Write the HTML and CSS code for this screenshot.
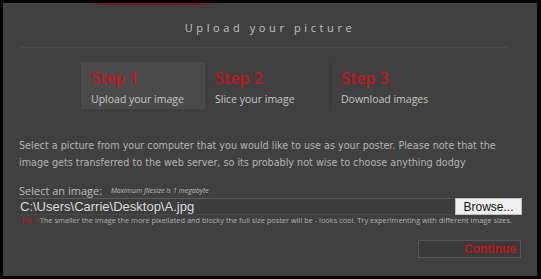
FILE: index.html
```html
<!DOCTYPE html>
<html>
<head>
<meta charset="utf-8">
<link rel="stylesheet" href="styles.css">
</head>
<body>
<div class="panel">
  <div class="glow"></div>
  <h1 class="title">Upload your picture</h1>
  <div class="rule"></div>
  <div class="steps">
    <div class="step active">
      <div class="step-num">Step 1</div>
      <div class="step-label">Upload your image</div>
    </div>
    <div class="step">
      <div class="step-num">Step 2</div>
      <div class="step-label">Slice your image</div>
    </div>
    <div class="step divided">
      <div class="step-num">Step 3</div>
      <div class="step-label">Download images</div>
    </div>
  </div>
  <p class="intro">Select a picture from your computer that you would like to use as your poster. Please note that the image gets transferred to the web server, so its probably not wise to choose anything dodgy</p>
  <div class="field-label">Select an image: <span class="hint">Maximum filesize is 1 megabyte</span></div>
  <div class="file-row">
    <div class="file-input">C:\Users\Carrie\Desktop\A.jpg</div>
    <button class="browse">Browse...</button>
  </div>
  <div class="tip"><span class="tip-mark">Tip *</span> The smaller the image the more pixellated and blocky the full size poster will be - looks cool. Try experimenting with different image sizes.</div>
  <div class="actions">
    <button class="continue">Continue</button>
  </div>
</div>
</body>
</html>
```
FILE: styles.css
```css
html, body {
  margin: 0;
  padding: 0;
  background: #000;
}
body {
  padding: 3px 4px 3px 3px;
  width: 541px;
  height: 279px;
  box-sizing: border-box;
}
.panel {
  position: relative;
  background: #404040;
  height: 273px;
  box-sizing: border-box;
  padding: 0 15px 0 15px;
  font-family: "Open Sans", sans-serif;
  color: #bdbdbd;
}
.glow {
  position: absolute;
  top: 0;
  left: 85px;
  width: 132px;
  height: 2px;
  background: linear-gradient(90deg, rgba(110,20,20,0), rgba(120,25,25,0.9) 15%, rgba(120,25,25,0.9) 85%, rgba(110,20,20,0));
}
.title {
  margin: 0;
  padding-top: 17px;
  height: 27px;
  text-align: center;
  font-size: 11px;
  font-weight: 400;
  letter-spacing: 3.6px;
  color: #c4c4c4;
  line-height: 16px;
}
.rule {
  height: 1px;
  background: #4c4c4c;
  margin: 0 15px 0 3px;
}
.steps {
  display: flex;
  margin: 14px 0 0 63px;
  height: 47px;
}
.step {
  width: 125px;
  box-sizing: border-box;
  padding: 3px 0 0 10px;
}
.step.active {
  background: #4a4a4a;
  width: 124px;
}
.step.divided {
  border-left: 1px solid #383838;
}
.step-num {
  color: #c0161c;
  font-size: 16px;
  font-weight: 600;
  line-height: 26px;
}
.step-label {
  font-size: 10.5px;
  line-height: 16px;
  color: #c8c8c8;
}
.intro {
  margin: 28px 0 0 1px;
  max-width: 485px;
  font-family: "DejaVu Sans Condensed", "DejaVu Sans", sans-serif;
  font-stretch: condensed;
  font-size: 10.7px;
  line-height: 17px;
  color: #b5b5b5;
}
.field-label {
  margin: 13px 0 0 1px;
  font-size: 11px;
  line-height: 14px;
  color: #bdbdbd;
}
.hint {
  font-size: 7px;
  font-style: italic;
  margin-left: 6px;
  vertical-align: 2px;
}
.file-row {
  display: flex;
  align-items: flex-start;
}
.file-input {
  width: 434px;
  height: 17px;
  box-sizing: border-box;
  border-top: 1px solid #5a5a5a;
  border-bottom: 1px solid #4a4a4a;
  background: #3d3d3d;
  font-family: "Liberation Sans", Arial, sans-serif;
  font-size: 13px;
  line-height: 15px;
  color: #dcdcdc;
  padding-left: 2px;
}
.browse {
  margin-left: 3px;
  width: 67px;
  height: 17px;
  padding: 0;
  background: #f0f0f0;
  border: 1px solid #bdbdbd;
  font-family: "Liberation Sans", Arial, sans-serif;
  font-size: 12px;
  color: #111;
}
.tip {
  margin: 0 0 0 3px;
  font-size: 7.4px;
  line-height: 10px;
  color: #b0b0b0;
}
.tip-mark {
  color: #b0161c;
  font-weight: 600;
}
.actions {
  display: flex;
  justify-content: flex-end;
  margin: 15px 1px 0 0;
}
.continue {
  width: 103px;
  height: 18px;
  padding: 0 4px 0 0;
  text-align: right;
  background: #3a3a3a;
  border: 1px solid #565656;
  font-family: "Liberation Sans", Arial, sans-serif;
  font-weight: bold;
  font-size: 12px;
  color: #c0161c;
}
```
